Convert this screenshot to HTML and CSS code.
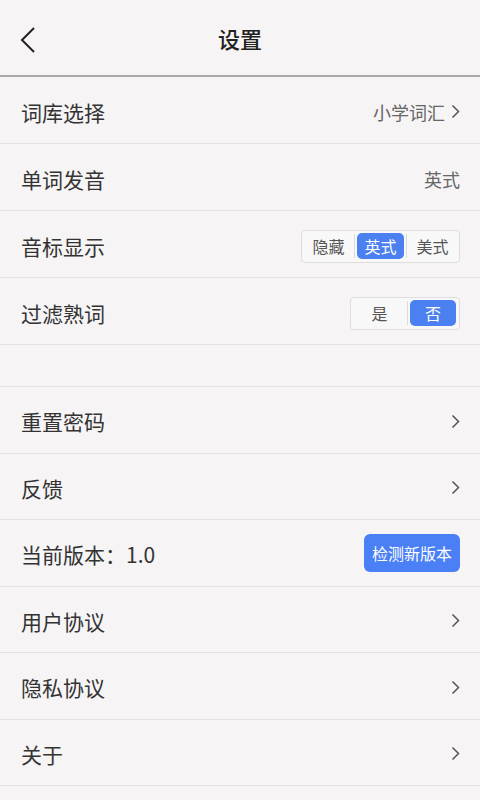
FILE: index.html
```html
<!DOCTYPE html>
<html lang="zh-CN">
<head>
  <meta charset="UTF-8" />
  <meta name="viewport" content="width=device-width, initial-scale=1.0" />
  <title>设置</title>
  <link rel="stylesheet" href="styles.css">
</head>
<body>
  <div class="header">
    <svg class="back" width="18" height="28" viewBox="0 0 18 28">
      <path d="M15 2 L3 14 L15 26" fill="none" stroke="#222" stroke-width="2" />
    </svg>
    <h1>设置</h1>
  </div>

  <div class="group top">
    <div class="row">
      <span class="label">词库选择</span>
      <span class="value">小学词汇
        <svg class="arrow" width="9" height="15" viewBox="0 0 9 15"><path d="M1.5 1.5 L7.5 7.5 L1.5 13.5" /></svg>
      </span>
    </div>
    <div class="row">
      <span class="label">单词发音</span>
      <span class="value">英式</span>
    </div>
    <div class="row">
      <span class="label">音标显示</span>
      <div class="segment">
        <span class="seg-item">隐藏</span>
        <span class="seg-line"></span>
        <span class="seg-item active">英式</span>
        <span class="seg-line"></span>
        <span class="seg-item">美式</span>
      </div>
    </div>
    <div class="row">
      <span class="label">过滤熟词</span>
      <div class="segment toggle">
        <span class="seg-item">是</span>
        <span class="seg-line"></span>
        <span class="seg-item active">否</span>
      </div>
    </div>
  </div>

  <div class="spacer"></div>

  <div class="group">
    <div class="row">
      <span class="label">重置密码</span>
      <svg class="arrow" width="9" height="15" viewBox="0 0 9 15"><path d="M1.5 1.5 L7.5 7.5 L1.5 13.5" /></svg>
    </div>
    <div class="row">
      <span class="label">反馈</span>
      <svg class="arrow" width="9" height="15" viewBox="0 0 9 15"><path d="M1.5 1.5 L7.5 7.5 L1.5 13.5" /></svg>
    </div>
    <div class="row">
      <span class="label">当前版本：1.0</span>
      <button class="check-btn">检测新版本</button>
    </div>
    <div class="row">
      <span class="label">用户协议</span>
      <svg class="arrow" width="9" height="15" viewBox="0 0 9 15"><path d="M1.5 1.5 L7.5 7.5 L1.5 13.5" /></svg>
    </div>
    <div class="row">
      <span class="label">隐私协议</span>
      <svg class="arrow" width="9" height="15" viewBox="0 0 9 15"><path d="M1.5 1.5 L7.5 7.5 L1.5 13.5" /></svg>
    </div>
    <div class="row">
      <span class="label">关于</span>
      <svg class="arrow" width="9" height="15" viewBox="0 0 9 15"><path d="M1.5 1.5 L7.5 7.5 L1.5 13.5" /></svg>
    </div>
  </div>
</body>
</html>
```

FILE: styles.css
```css
body {
  margin: 0;
  background-color: #f6f4f5;
  font-family: "Noto Sans CJK SC", "Noto Sans", sans-serif;
  color: #333;
}
.header {
  display: flex;
  align-items: center;
  justify-content: center;
  height: 75px;
  border-bottom: 2px solid #a9a9a9;
  position: relative;
}
.header h1 {
  margin: 0;
  font-size: 22px;
  font-weight: 500;
  color: #222;
}
.back {
  position: absolute;
  left: 19px;
  top: 26px;
}
.row {
  display: flex;
  align-items: center;
  justify-content: space-between;
  box-sizing: border-box;
  height: 66.5px;
  padding: 3px 20px 0 21px;
  border-bottom: 1px solid #e4e2e3;
}
.top .row {
  height: 67px;
}
.label {
  font-size: 21px;
  color: #333;
}
.value {
  display: flex;
  align-items: center;
  gap: 6px;
  font-size: 18px;
  color: #666;
}
.arrow path {
  fill: none;
  stroke: #555;
  stroke-width: 1.5;
}
.spacer {
  height: 41px;
  border-bottom: 1px solid #e4e2e3;
}
.segment {
  display: flex;
  align-items: center;
  height: 33px;
  box-sizing: border-box;
  padding: 0 3px;
  margin-top: 1px;
  border: 1px solid #dedcdd;
  border-radius: 4px;
  background-color: #f9f8f9;
  font-size: 16px;
  color: #555;
}
.seg-item {
  display: flex;
  align-items: center;
  justify-content: center;
  width: 47px;
  height: 26px;
  border-radius: 5px;
}
.seg-item.active {
  background-color: #4a80f0;
  color: #fff;
}
.seg-line {
  width: 1px;
  height: 24px;
  margin: 0 2px;
  background-color: #dcdcdc;
}
.toggle .seg-item {
  width: 51px;
}
.toggle .seg-item.active {
  width: 46px;
}
.check-btn {
  height: 38px;
  padding: 0 8px;
  margin-top: -3px;
  border: none;
  border-radius: 6px;
  background-color: #4a7ff5;
  color: #fff;
  font-family: inherit;
  font-size: 16px;
}
```
